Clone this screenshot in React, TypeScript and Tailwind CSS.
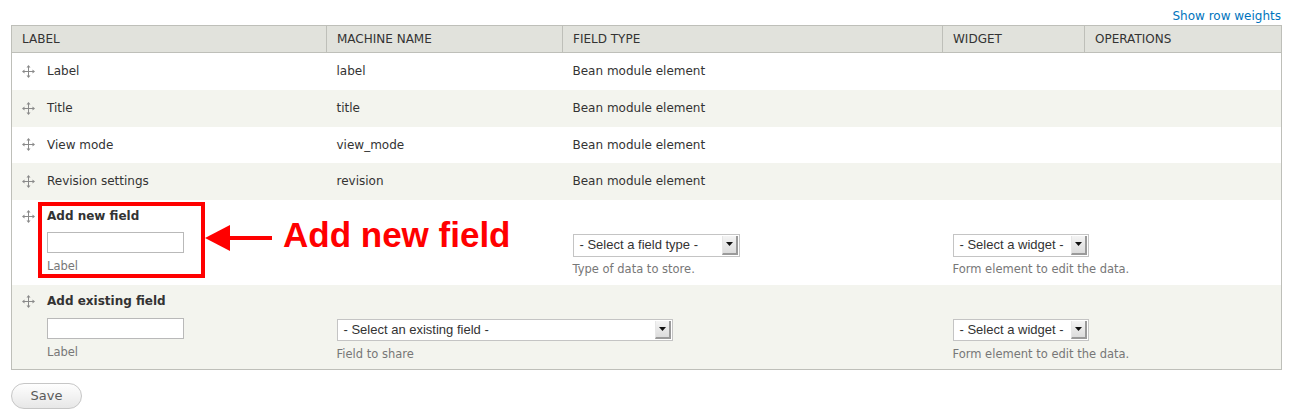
import React from "react";

const font = "font-['DejaVu_Sans',sans-serif]";

function DragIcon() {
  return (
    <svg width="13" height="13" viewBox="0 0 13 13" className="shrink-0">
      <g fill="#8a8a8a">
        <rect x="6" y="2" width="1" height="9" />
        <rect x="2" y="6" width="9" height="1" />
        <polygon points="6.5,0 4.5,2.5 8.5,2.5" />
        <polygon points="6.5,13 4.5,10.5 8.5,10.5" />
        <polygon points="0,6.5 2.5,4.5 2.5,8.5" />
        <polygon points="13,6.5 10.5,4.5 10.5,8.5" />
      </g>
    </svg>
  );
}

function FakeSelect({ text, w, h }: { text: string; w: string; h: string }) {
  return (
    <div
      className={`${w} ${h} flex items-stretch border border-[#c4c4c4] bg-white font-['Liberation_Sans',sans-serif] text-[13px] text-[#333]`}
    >
      <div className="flex-1 flex items-center pl-[6px] whitespace-nowrap overflow-hidden">{text}</div>
      <div className="w-[16px] my-[1px] mr-[1px] flex items-center justify-center bg-gradient-to-b from-[#f4f4f4] to-[#dcdcdc] border-r-2 border-b-2 border-[#9a9a9a] border-l border-l-[#e6e6e6]">
        <svg width="7" height="4" viewBox="0 0 7 4">
          <polygon points="0,0 7,0 3.5,4" fill="#111" />
        </svg>
      </div>
    </div>
  );
}

function TextInput() {
  return <div className="w-[137px] h-[21px] border border-[#b9b9b9] bg-white" />;
}

function Desc({ children }: { children: React.ReactNode }) {
  return <div className="text-[11.5px] leading-[14px] text-[#777]">{children}</div>;
}

export default function App() {
  const rows = [
    { label: "Label", machine: "label", bg: "bg-white", h: "h-[37px]" },
    { label: "Title", machine: "title", bg: "bg-[#f3f4ee]", h: "h-[37px]" },
    { label: "View mode", machine: "view_mode", bg: "bg-white", h: "h-[36px]" },
    { label: "Revision settings", machine: "revision", bg: "bg-[#f3f4ee]", h: "h-[37px]" },
  ];
  return (
    <div className={`${font} w-[1302px] h-[417px] bg-white text-[#333] text-[12px]`}>
      <div className="w-[1270px] ml-[11px] pt-[7px]">
        <div className="flex justify-end h-[18px] leading-[18px]">
          <span className="text-[#0074bd]">Show row weights</span>
        </div>
        <div className="relative">
          <table className="w-[1270px] table-fixed border-collapse border border-[#bebfb9]">
            <colgroup>
              <col className="w-[315px]" />
              <col className="w-[236px]" />
              <col className="w-[380px]" />
              <col className="w-[142px]" />
              <col className="w-[197px]" />
            </colgroup>
            <thead>
              <tr className="h-[27px] bg-[#e1e2dc] border-b border-[#bebfb9]">
                {["LABEL", "MACHINE NAME", "FIELD TYPE", "WIDGET", "OPERATIONS"].map((t, i) => (
                  <th
                    key={t}
                    className={`text-left font-normal px-[10px] py-0 text-[12px] text-[#333] ${
                      i < 4 ? "border-r border-[#bebfb9]" : ""
                    }`}
                  >
                    {t}
                  </th>
                ))}
              </tr>
            </thead>
            <tbody>
              {rows.map((r) => (
                <tr key={r.label} className={`${r.bg} ${r.h}`}>
                  <td className="px-[10px]">
                    <div className="flex items-center gap-[12px]">
                      <DragIcon />
                      <span>{r.label}</span>
                    </div>
                  </td>
                  <td className="px-[10px]">{r.machine}</td>
                  <td className="px-[10px]">Bean module element</td>
                  <td />
                  <td />
                </tr>
              ))}
              <tr className="bg-white h-[85px] align-top">
                <td className="px-[10px] pt-[8px]">
                  <div className="flex gap-[12px]">
                    <div className="pt-[2px]">
                      <DragIcon />
                    </div>
                    <div>
                      <div className="font-bold leading-[16px]">Add new field</div>
                      <div className="mt-[8px]">
                        <TextInput />
                      </div>
                      <div className="mt-[6px]">
                        <Desc>Label</Desc>
                      </div>
                    </div>
                  </div>
                </td>
                <td />
                <td className="px-[10px] pt-[34px]">
                  <FakeSelect text="- Select a field type -" w="w-[167px]" h="h-[23px]" />
                  <div className="mt-[5px]">
                    <Desc>Type of data to store.</Desc>
                  </div>
                </td>
                <td className="px-[10px] pt-[34px]">
                  <div className="w-[220px]">
                    <FakeSelect text="- Select a widget -" w="w-[136px]" h="h-[23px]" />
                    <div className="mt-[5px] whitespace-nowrap">
                      <Desc>Form element to edit the data.</Desc>
                    </div>
                  </div>
                </td>
                <td />
              </tr>
              <tr className="bg-[#f3f4ee] h-[85px] align-top">
                <td className="px-[10px] pt-[8px]">
                  <div className="flex gap-[12px]">
                    <div className="pt-[2px]">
                      <DragIcon />
                    </div>
                    <div>
                      <div className="font-bold leading-[16px]">Add existing field</div>
                      <div className="mt-[9px]">
                        <TextInput />
                      </div>
                      <div className="mt-[6px]">
                        <Desc>Label</Desc>
                      </div>
                    </div>
                  </div>
                </td>
                <td className="px-[10px] pt-[34px]" colSpan={2}>
                  <FakeSelect text="- Select an existing field -" w="w-[336px]" h="h-[22px]" />
                  <div className="mt-[6px]">
                    <Desc>Field to share</Desc>
                  </div>
                </td>
                <td className="px-[10px] pt-[34px]">
                  <div className="w-[220px]">
                    <FakeSelect text="- Select a widget -" w="w-[136px]" h="h-[22px]" />
                    <div className="mt-[6px] whitespace-nowrap">
                      <Desc>Form element to edit the data.</Desc>
                    </div>
                  </div>
                </td>
                <td />
              </tr>
            </tbody>
          </table>

          {/* Annotation overlay */}
          <div className="absolute left-[27px] top-[177px] w-[167px] h-[76px] border-[4px] border-[#ff0000]" />
          <svg className="absolute left-[193px] top-[198px]" width="70" height="30" viewBox="0 0 70 30">
            <polygon points="1,15 26,2 26,28" fill="#ff0000" />
            <rect x="24" y="13" width="44" height="4" fill="#ff0000" />
          </svg>
          <div className="absolute left-[272px] top-[190px] font-['Liberation_Sans',sans-serif] font-bold text-[35px] leading-[40px] text-[#ff0000] whitespace-nowrap">
            Add new field
          </div>
        </div>
        <div className="mt-[13px]">
          <button className="w-[71px] h-[26px] rounded-full border border-[#c6c6c6] bg-gradient-to-b from-[#fefefe] to-[#e7e7e7] text-[13px] text-[#5a5a5a]">
            Save
          </button>
        </div>
      </div>
    </div>
  );
}
